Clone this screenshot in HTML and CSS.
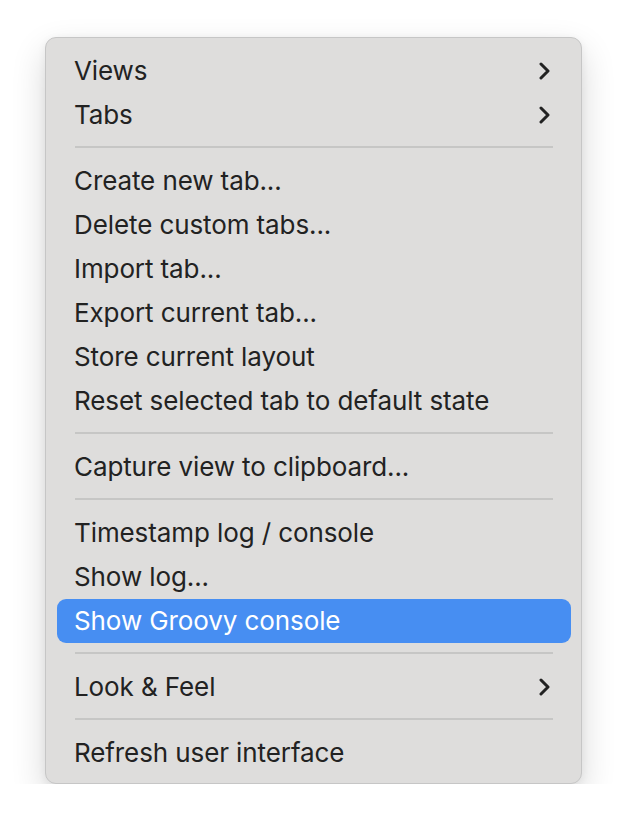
FILE: index.html
```html
<!DOCTYPE html>
<html>
<head>
<meta charset="utf-8">
<link rel="stylesheet" href="styles.css">
</head>
<body>
<div class="menu">
  <div class="item"><span>Views</span><svg class="chev" width="11" height="18" viewBox="0 0 11 18"><polyline points="2,2 9,9 2,16"/></svg></div>
  <div class="item"><span>Tabs</span><svg class="chev" width="11" height="18" viewBox="0 0 11 18"><polyline points="2,2 9,9 2,16"/></svg></div>
  <div class="sep"></div>
  <div class="item"><span>Create new tab...</span></div>
  <div class="item"><span>Delete custom tabs...</span></div>
  <div class="item"><span>Import tab...</span></div>
  <div class="item"><span>Export current tab...</span></div>
  <div class="item"><span>Store current layout</span></div>
  <div class="item"><span>Reset selected tab to default state</span></div>
  <div class="sep"></div>
  <div class="item"><span>Capture view to clipboard...</span></div>
  <div class="sep"></div>
  <div class="item"><span>Timestamp log / console</span></div>
  <div class="item"><span>Show log...</span></div>
  <div class="item active"><span>Show Groovy console</span></div>
  <div class="sep"></div>
  <div class="item"><span>Look &amp; Feel</span><svg class="chev" width="11" height="18" viewBox="0 0 11 18"><polyline points="2,2 9,9 2,16"/></svg></div>
  <div class="sep"></div>
  <div class="item"><span>Refresh user interface</span></div>
</div>
</body>
</html>
```
FILE: styles.css
```css
html, body {
  margin: 0;
  padding: 0;
  background: #ffffff;
}
body {
  font-family: Inter, "Noto Sans", "Liberation Sans", sans-serif;
}
.menu {
  box-sizing: border-box;
  width: 537px;
  margin: 37px 0 0 45px;
  padding: 11px 10px 8px 11px;
  background: #dedddc;
  border: 1px solid #c6c6c6;
  border-radius: 11px;
  box-shadow: 0 14px 34px rgba(0, 0, 0, 0.16), 0 2px 8px rgba(0, 0, 0, 0.06);
}
.item {
  box-sizing: border-box;
  height: 44px;
  display: flex;
  align-items: center;
  justify-content: space-between;
  padding: 0 21px 2px 17px;
  border-radius: 9px;
  font-size: 26px;
  letter-spacing: -0.1px;
  color: #222222;
}
.item .chev {
  margin-top: 2px;
}
.item.active {
  background: #478ef2;
  color: #ffffff;
}
.chev polyline {
  fill: none;
  stroke: #222222;
  stroke-width: 3;
  stroke-linecap: round;
  stroke-linejoin: round;
}
.sep {
  height: 2px;
  margin: 9px 18px 11px 18px;
  background: #c6c6c5;
}
```
